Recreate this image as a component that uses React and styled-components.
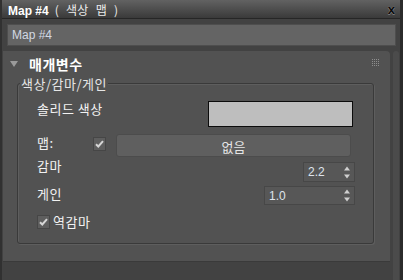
import styled, { createGlobalStyle } from 'styled-components'

const Global = createGlobalStyle`
  html, body { margin: 0; padding: 0; background: #424242; }
  body { font-family: "Noto Sans CJK KR", "Liberation Sans", sans-serif; }
`

const Window = styled.div`
  width: 403px;
  height: 280px;
  box-sizing: border-box;
  background: #424242;
  border-left: 2px solid #313131;
  border-right: 3px solid #2b2b2b;
  display: flex;
  flex-direction: column;
  overflow: hidden;
`

const TitleBar = styled.div`
  height: 19px;
  flex: none;
  box-sizing: border-box;
  display: flex;
  align-items: center;
  padding: 0 5px 0 6px;
  background: linear-gradient(#626262, #3a3a3a);
  border-bottom: 1px solid #262626;
  color: #fff;
  font: bold 12px "Liberation Sans", "Noto Sans CJK KR", sans-serif;
`

const TitleText = styled.span`
  flex: 1;
  white-space: pre;
`

const TitleSub = styled.span`
  font: 12px "Noto Sans CJK KR", sans-serif;
  color: #ececec;
  word-spacing: 4px;
  letter-spacing: 0.3px;
  margin-left: 6px;
`

const Close = styled.span`
  font: bold 13px "Liberation Sans", sans-serif;
  color: #0a0a0a;
  text-shadow: 0 0 1px #9a9a9a, 0 1px 0 #777;
`

const NameField = styled.div`
  height: 22px;
  margin: 5px 4px 0 5px;
  box-sizing: border-box;
  background: #646464;
  border: 1px solid #4e4e4e;
  padding-left: 4px;
  display: flex;
  align-items: center;
  color: #d2d8e2;
  font: 12px "Liberation Sans", sans-serif;
`

const RolloutArea = styled.div`
  flex: 1;
  display: flex;
  margin-top: 5px;
`

const Column = styled.div`
  display: flex;
  flex-direction: column;
`

const Panel = styled.div`
  width: 387px;
  height: 211px;
  margin-left: 1px;
  box-sizing: border-box;
  background: #525252;
  border-radius: 0 4px 0 0;
  border-bottom: 1px solid #3a3a3a;
  display: flex;
  flex-direction: column;
`

const ScrollTrack = styled.div`
  width: 6px;
  margin-left: 3px;
  background: #4b4b4b;
  border-radius: 3px 3px 0 0;
`

const Header = styled.div`
  height: 20px;
  margin-top: 2px;
  display: flex;
  align-items: center;
  padding: 0 10px 0 7px;
`

const Arrow = styled.span`
  width: 0;
  height: 0;
  border-left: 4px solid transparent;
  border-right: 4px solid transparent;
  border-top: 6px solid #9a9a9a;
  margin-right: 11px;
  margin-top: 1px;
`

const HeaderText = styled.span`
  flex: 1;
  color: #fff;
  font-weight: bold;
  font-size: 14px;
  letter-spacing: 0.5px;
  line-height: 20px;
  margin-top: 2px;
`

const Group = styled.div`
  position: relative;
  height: 161px;
  margin: 10px 16px 0 14px;
  box-sizing: border-box;
  border: 1px solid #3a3a3a;
  box-shadow: inset 1px 1px 0 #5e5e5e, 1px 1px 0 #5e5e5e;
  border-radius: 3px;
  padding: 16px 20px 0 19px;
  display: flex;
  flex-direction: column;
`

const Legend = styled.span`
  position: absolute;
  top: -7px;
  left: 2px;
  padding: 0 1px;
  background: #525252;
  color: #e6e6e6;
  font-size: 13px;
  letter-spacing: 0.5px;
  line-height: 14px;
`

const Row = styled.div`
  display: flex;
  align-items: flex-start;
  height: ${p => p.h}px;
  margin-top: ${p => p.gap || 0}px;
`

const Label = styled.span`
  color: #f2f2f2;
  font-size: 13px;
  letter-spacing: 0.5px;
  line-height: 14px;
  white-space: pre;
  width: ${p => (p.w ? `${p.w}px` : 'auto')};
  margin-top: ${p => (p.top === undefined ? 2 : p.top)}px;
`

const Swatch = styled.div`
  margin: 1px 0 0 auto;
  width: 145px;
  height: 26px;
  box-sizing: border-box;
  background: #bebebe;
  border: 1px solid #0c0c0c;
`

const CheckBox = styled.span`
  width: 13px;
  height: 14px;
  flex: none;
  box-sizing: border-box;
  background: #5e5e5e;
  border: 1px solid #464646;
  display: flex;
  align-items: center;
  justify-content: center;
  margin-top: ${p => p.top || 0}px;
  margin-right: ${p => p.right || 0}px;
`

const MapButton = styled.div`
  margin-left: 10px;
  width: 235px;
  height: 23px;
  box-sizing: border-box;
  background: #5f5f5f;
  border: 1px solid #4c4c4c;
  border-radius: 3px;
  display: flex;
  align-items: center;
  justify-content: center;
  color: #e6e6e6;
  font-size: 13px;
  padding-top: 1px;
`

const Spinner = styled.div`
  margin: ${p => p.top}px -2px 0 auto;
  width: ${p => p.w}px;
  height: ${p => p.h}px;
  box-sizing: border-box;
  background: #575757;
  border: 1px solid #474747;
  display: flex;
  align-items: center;
  padding: 0 4px 0 4px;
  color: #dfe4ec;
  font: 12px "Liberation Sans", sans-serif;
`

const SpinValue = styled.span`
  flex: 1;
`

const Check = () => (
  <svg width="9" height="8" viewBox="0 0 9 8">
    <path d="M1 4.2 L3.3 6.5 L8 1.2" fill="none" stroke="#d6d6d6" strokeWidth="2" />
  </svg>
)

const Arrows = () => (
  <svg width="6" height="13" viewBox="0 0 6 13">
    <path d="M3 0.5 L6 4.5 L0 4.5 Z" fill="#cfcfcf" />
    <path d="M0 8.5 L6 8.5 L3 12.5 Z" fill="#cfcfcf" />
  </svg>
)

const Grip = () => (
  <svg width="8" height="8" viewBox="0 0 8 8">
    {[0, 2, 4, 6].map(y =>
      [0, 2, 4, 6].map(x => <rect key={`${x}-${y}`} x={x} y={y} width="1" height="1" fill="#8e8e8e" />)
    )}
  </svg>
)

const App = () => (
  <>
    <Global />
    <Window>
      <TitleBar>
        <TitleText>
          Map #4<TitleSub>( 색상 맵 )</TitleSub>
        </TitleText>
        <Close>x</Close>
      </TitleBar>
      <NameField>Map #4</NameField>
      <RolloutArea>
        <Column>
          <Panel>
            <Header>
              <Arrow />
              <HeaderText>매개변수</HeaderText>
              <Grip />
            </Header>
            <Group>
              <Legend>색상/감마/게인</Legend>
              <Row h={28}>
                <Label>솔리드 색상</Label>
                <Swatch />
              </Row>
              <Row h={23} gap={6}>
                <Label w={56}>맵:</Label>
                <CheckBox top={3}><Check /></CheckBox>
                <MapButton>없음</MapButton>
              </Row>
              <Row h={25}>
                <Label>감마</Label>
                <Spinner top={5} w={52} h={20}>
                  <SpinValue>2.2</SpinValue>
                  <Arrows />
                </Spinner>
              </Row>
              <Row h={20} gap={3}>
                <Label>게인</Label>
                <Spinner top={1} w={91} h={19}>
                  <SpinValue>1.0</SpinValue>
                  <Arrows />
                </Spinner>
              </Row>
              <Row h={16} gap={8}>
                <CheckBox right={3} top={2}><Check /></CheckBox>
                <Label>역감마</Label>
              </Row>
            </Group>
          </Panel>
        </Column>
        <ScrollTrack />
      </RolloutArea>
    </Window>
  </>
)

export default App
